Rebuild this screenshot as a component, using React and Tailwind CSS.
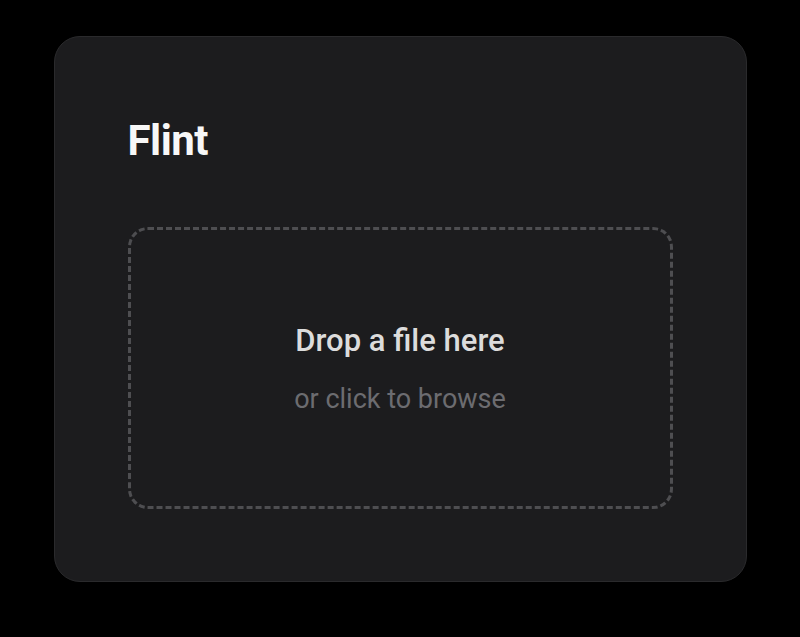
export default function App() {
  return (
    <div
      className="flex h-[637px] w-[800px] items-start justify-center bg-black pt-[36px]"
      style={{ fontFamily: "Roboto, 'Noto Sans', sans-serif" }}
    >
      <div className="flex h-[546px] w-[693px] flex-col rounded-[26px] border border-[#2a2a2c] bg-[#1c1c1e] px-[73px] pt-[76px] pb-[72px]">
        <h1 className="text-[42px] leading-[56px] font-bold tracking-[-0.5px] text-[#f7f7f7]">
          Flint
        </h1>
        <div className="mt-[58px] flex flex-1 cursor-pointer flex-col items-center justify-center rounded-[20px] border-[3px] border-dashed border-[#4e4e51] pt-[1px]">
          <p className="text-[31px] leading-[36px] font-medium text-[#dcdcdc]">
            Drop a file here
          </p>
          <p className="mt-[24px] text-[27px] leading-[32px] text-[#6c6c70]">
            or click to browse
          </p>
        </div>
      </div>
    </div>
  );
}
